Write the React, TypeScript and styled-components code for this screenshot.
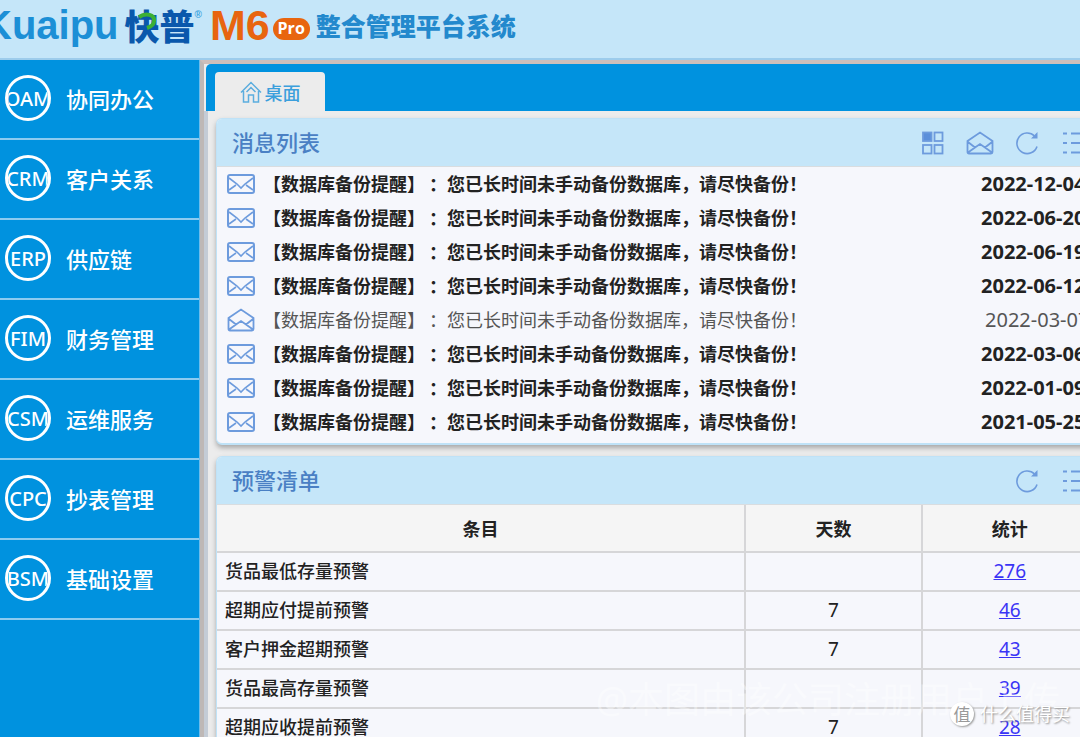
import React from 'react';
import styled, { createGlobalStyle, css } from 'styled-components';

const sans = `"Noto Sans", "Noto Sans CJK SC", sans-serif`;

const GlobalStyle = createGlobalStyle`
  *, *::before, *::after { box-sizing: border-box; }
  html, body, #root { height: 100%; }
  body { margin: 0; overflow: hidden; font-family: ${sans}; color: #222; background: #ececec; }
  button { font: inherit; color: inherit; border: 0; padding: 0; background: none; cursor: pointer; }
  svg { display: block; }
`;

const Shell = styled.div`
  position: relative;
  display: flex;
  flex-direction: column;
  height: 100vh;
  overflow: hidden;
`;

const Header = styled.header`
  display: flex;
  align-items: center;
  flex: none;
  height: 60px;
  padding-bottom: 8px;
  background: #c5e6f9;
  border-bottom: 2px solid #9dccec;
  white-space: nowrap;
`;

const Brand = styled.div`
  display: flex;
  align-items: center;
  flex: none;
  margin-left: -17px;
  color: #1c8fd6;
  font: 700 40px/50px "Liberation Sans", sans-serif;
`;

const BrandCjk = styled.span`
  position: relative;
  margin-left: 6px;
  color: #0a58ac;
  font: 900 35px/48px "Noto Sans CJK SC", sans-serif;
`;

const BrandArc = styled.svg`
  position: absolute;
  left: 13px;
  top: 11px;
`;

const Registered = styled.sup`
  align-self: flex-start;
  margin-top: 8px;
  color: #3ca4e0;
  font: 700 10px/14px "Liberation Sans", sans-serif;
`;

const Model = styled.span`
  margin-left: 8px;
  color: #e8650f;
  font: 700 43px/52px "Liberation Sans", sans-serif;
`;

const ProPill = styled.span`
  width: 37px;
  height: 22px;
  margin: 8px 6px 0 3px;
  border-radius: 11px;
  background: #e8650f;
  color: #fff;
  text-align: center;
  font: 700 16px/20px "Open Sans", sans-serif;
`;

const Product = styled.h1`
  margin: 0;
  color: #2389cd;
  font: 900 25px/50px "Noto Sans CJK SC", sans-serif;
`;

const Body = styled.div`
  display: flex;
  flex: 1;
  min-height: 0;
`;

const Sidebar = styled.nav`
  flex: none;
  width: 200px;
  background: #0092df;
  border-right: 1px solid #6bbcec;
`;

const NavItem = styled.button`
  display: flex;
  align-items: center;
  gap: 15px;
  width: 100%;
  height: 80px;
  padding: 0 0 2px 5px;
  border-bottom: 2px solid #8ccbf0;
  color: #fff;
  font-size: 22px;
  font-weight: 500;
`;

const Code = styled.span`
  display: flex;
  align-items: center;
  justify-content: center;
  flex: none;
  width: 46px;
  height: 46px;
  overflow: hidden;
  border: 3px solid #fff;
  border-radius: 50%;
  font-size: 20px;
`;

const Workspace = styled.main`
  display: flex;
  flex-direction: column;
  flex: 1;
  min-width: 0;
  overflow: hidden;
  border-left: 4px solid #beb8b6;
  border-top: 4px solid #cdbfbb;
  background: #ececec;
`;

const TabBar = styled.div`
  display: flex;
  align-items: flex-end;
  flex: none;
  height: 47px;
  margin-left: 2px;
  padding-left: 9px;
  border-top-left-radius: 5px;
  background: #0092df;
`;

const Tab = styled.button`
  display: flex;
  align-items: center;
  justify-content: center;
  gap: 3px;
  width: 110px;
  height: 39px;
  border-radius: 4px 4px 0 0;
  background: #ececec;
  color: #3b9fdc;
  font-size: 18px;
  font-weight: 500;
`;

const Panels = styled.div`
  display: flex;
  flex-direction: column;
  flex: 1;
  gap: 11px;
  min-height: 0;
  margin-right: -20px;
  padding: 7px 0 0 8px;
  border-left: 4px solid #c4ccd6;
`;

const Panel = styled.section`
  flex: none;
  border: 1px solid #bfe2f7;
  border-bottom-width: 2px;
  border-radius: 6px;
  background: #f6f7fc;
  box-shadow: 0 3px 5px #a9a9a9;
`;

const PanelHead = styled.header`
  display: flex;
  align-items: center;
  height: 48px;
  padding: 0 2px 0 15px;
  border-bottom: 1px solid #d9dde0;
  border-radius: 5px 5px 0 0;
  background: #c5e6f9;
`;

const PanelTitle = styled.h2`
  flex: 1;
  margin: 0;
  padding-bottom: 2px;
  color: #4a80c4;
  font-size: 22px;
  font-weight: 500;
  line-height: 32px;
`;

const Tools = styled.div`
  display: flex;
  align-items: center;
`;

const ToolButton = styled.button`
  display: grid;
  place-items: center;
  width: 47px;
  height: 32px;
`;

const Messages = styled.ul`
  margin: 0;
  padding: 0 0 4px;
  list-style: none;
`;

const Message = styled.li<{ $read?: boolean }>`
  display: flex;
  align-items: center;
  height: 34px;
  padding-left: 10px;
  color: #222;
  font-size: 18px;
  font-weight: 700;
  white-space: nowrap;
  ${({ $read }) => $read && css`color: #555; font-weight: 400;`}
`;

const Tag = styled.span`
  margin: 0 4px 0 8px;
  padding-bottom: 2px;
`;

const Text = styled.span`
  flex: 1;
  padding-bottom: 2px;
`;

const Stamp = styled.time<{ $read?: boolean }>`
  flex: none;
  width: 118px;
  padding: 0 0 2px ${({ $read }) => ($read ? 4 : 0)}px;
  font-size: 20px;
`;

const AlertTable = styled.table`
  width: 100%;
  table-layout: fixed;
  border-collapse: separate;
  border-spacing: 0;
  font-size: 18px;
`;

const HeadCell = styled.th<{ $wide?: boolean }>`
  width: ${({ $wide }) => ($wide ? 60 : 20)}%;
  height: 48px;
  padding: 0;
  border-right: 2px solid #d6d6d8;
  border-bottom: 2px solid #d6d6d8;
  background: #f5f5f5;
  font-weight: 700;
`;

const Cell = styled.td<{ $name?: boolean }>`
  height: 39px;
  padding: 0 8px 2px;
  border-right: 2px solid #d6d6d8;
  border-bottom: 2px solid #d6d6d8;
  line-height: 26px;
  text-align: center;
  font-size: 19px;
  ${({ $name }) => $name && css`text-align: left; font-size: 18px; font-weight: 500;`}
`;

const Count = styled.a`
  color: #3a34f5;
  text-decoration: underline;
`;

const Watermark = styled.div`
  position: absolute;
  right: 20px;
  bottom: 12px;
  color: rgba(255, 255, 255, 0.4);
  font-size: 36px;
  line-height: 50px;
  white-space: nowrap;
  pointer-events: none;
`;

const SiteMark = styled.div`
  position: absolute;
  right: 10px;
  bottom: 10px;
  display: flex;
  align-items: center;
  gap: 6px;
  color: #fff;
  font-size: 18px;
  line-height: 26px;
  text-shadow: 1px 1px 2px #888;
  white-space: nowrap;
  pointer-events: none;
`;

const SiteSeal = styled.span`
  display: grid;
  place-items: center;
  width: 24px;
  height: 24px;
  border-radius: 50%;
  background: #fff;
  box-shadow: 1px 1px 2px #999;
  color: #999;
  font-size: 17px;
  text-shadow: none;
`;

const line = { fill: 'none', stroke: '#6d9bdd', strokeWidth: 2 };

const ClosedMail = () => (
  <svg width="28" height="20" viewBox="0 0 28 20" {...line} aria-hidden="true">
    <rect x="1" y="1" width="26" height="18" rx="2" />
    <path d="M2 4l8 6 4 4 4-4 8-6M2 16l7-5M26 16l-7-5" strokeWidth="1.6" />
  </svg>
);

const OpenMail = () => (
  <svg width="28" height="24" viewBox="0 0 28 24" {...line} strokeWidth={1.8} aria-hidden="true">
    <path d="M1.5 10L14 1.5 26.500 10v11q0 1.500-1.500 1.500H3q-1.500 0-1.500-1.500zM2 11l7 5.500M26 11l-7 5.500M2 21.500l7-5 5-3.500 5 3.500 7 5" />
  </svg>
);

const GridIcon = () => (
  <svg width="22" height="24" viewBox="0 0 22 24" {...line} strokeWidth={1.8} aria-hidden="true">
    <rect x="1" y="1.500" width="8.500" height="8.500" fill="#5b8fda" />
    <rect x="12.500" y="1.500" width="8" height="8.500" />
    <rect x="1" y="14" width="8.500" height="8.500" />
    <rect x="12.500" y="14" width="8" height="8.500" />
  </svg>
);

const RefreshIcon = () => (
  <svg width="24" height="24" viewBox="0 0 24 24" {...line} strokeWidth={1.6} aria-hidden="true">
    <path d="M22 15.500A10.300 10.300 0 1 1 19.500 5" />
    <path d="M22.500 1v6.500H16z" fill="#6d9bdd" stroke="none" />
  </svg>
);

const ListIcon = () => (
  <svg width="24" height="24" viewBox="0 0 24 24" {...line} aria-hidden="true">
    <path d="M1 2.500h4M9 2.500h15M1 12h4M9 12h15M1 21.500h4M9 21.500h15" />
  </svg>
);

const HomeIcon = () => (
  <svg width="22" height="22" viewBox="0 0 22 22" fill="none" stroke="#5badde" strokeWidth="1.5" aria-hidden="true">
    <path d="M1 11.500L11 1.500l10 10M3.500 10v11h5v-7h5v7h5V10M6.500 11L11 6.500l4.500 4.500" />
  </svg>
);

const modules = [
  ['OAM', '协同办公'],
  ['CRM', '客户关系'],
  ['ERP', '供应链'],
  ['FIM', '财务管理'],
  ['CSM', '运维服务'],
  ['CPC', '抄表管理'],
  ['BSM', '基础设置'],
];

const messages = [
  { date: '2022-12-04' },
  { date: '2022-06-20' },
  { date: '2022-06-19' },
  { date: '2022-06-12' },
  { date: '2022-03-07', read: true },
  { date: '2022-03-06' },
  { date: '2022-01-09' },
  { date: '2021-05-25' },
];

const alerts = [
  { name: '货品最低存量预警', days: '', count: 276 },
  { name: '超期应付提前预警', days: '7', count: 46 },
  { name: '客户押金超期预警', days: '7', count: 43 },
  { name: '货品最高存量预警', days: '', count: 39 },
  { name: '超期应收提前预警', days: '7', count: 28 },
];

export default function App() {
  return (
    <Shell>
      <GlobalStyle />
      <Header>
        <Brand>
          Kuaipu
          <BrandCjk>
            快普
            <BrandArc width="20" height="20" viewBox="0 0 20 20" fill="none" stroke="#3cb035" strokeWidth="4" aria-hidden="true">
              <path d="M1 5C8 0 17 3 16 9c0 4-4 6-7 7" />
            </BrandArc>
          </BrandCjk>
          <Registered>®</Registered>
        </Brand>
        <Model>M6</Model>
        <ProPill>Pro</ProPill>
        <Product>整合管理平台系统</Product>
      </Header>
      <Body>
        <Sidebar>
          {modules.map(([code, label]) => (
            <NavItem key={code} type="button">
              <Code>{code}</Code>
              {label}
            </NavItem>
          ))}
        </Sidebar>
        <Workspace>
          <TabBar>
            <Tab type="button"><HomeIcon />桌面</Tab>
          </TabBar>
          <Panels>
            <Panel>
              <PanelHead>
                <PanelTitle>消息列表</PanelTitle>
                <Tools>
                  <ToolButton type="button" aria-label="视图"><GridIcon /></ToolButton>
                  <ToolButton type="button" aria-label="已读"><OpenMail /></ToolButton>
                  <ToolButton type="button" aria-label="刷新"><RefreshIcon /></ToolButton>
                  <ToolButton type="button" aria-label="更多"><ListIcon /></ToolButton>
                </Tools>
              </PanelHead>
              <Messages>
                {messages.map(({ date, read }) => (
                  <Message key={date} $read={read}>
                    {read ? <OpenMail /> : <ClosedMail />}
                    <Tag>【数据库备份提醒】</Tag>
                    <Text>：您已长时间未手动备份数据库，请尽快备份！</Text>
                    <Stamp $read={read}>{date}</Stamp>
                  </Message>
                ))}
              </Messages>
            </Panel>
            <Panel>
              <PanelHead>
                <PanelTitle>预警清单</PanelTitle>
                <Tools>
                  <ToolButton type="button" aria-label="刷新"><RefreshIcon /></ToolButton>
                  <ToolButton type="button" aria-label="更多"><ListIcon /></ToolButton>
                </Tools>
              </PanelHead>
              <AlertTable>
                <thead>
                  <tr>
                    <HeadCell $wide>条目</HeadCell>
                    <HeadCell>天数</HeadCell>
                    <HeadCell>统计</HeadCell>
                  </tr>
                </thead>
                <tbody>
                  {alerts.map(({ name, days, count }) => (
                    <tr key={name}>
                      <Cell $name>{name}</Cell>
                      <Cell>{days}</Cell>
                      <Cell><Count href="#">{count}</Count></Cell>
                    </tr>
                  ))}
                </tbody>
              </AlertTable>
            </Panel>
          </Panels>
        </Workspace>
      </Body>
      <Watermark>@本图由该公司注册用户上传</Watermark>
      <SiteMark><SiteSeal>值</SiteSeal>什么值得买</SiteMark>
    </Shell>
  );
}
